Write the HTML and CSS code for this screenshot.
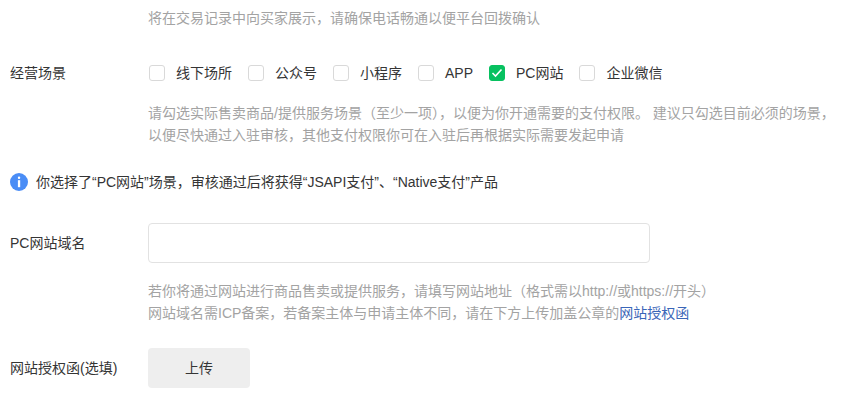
FILE: index.html
```html
<!DOCTYPE html>
<html lang="zh-CN">
<head>
<meta charset="utf-8">
<title>经营场景</title>
<link rel="stylesheet" href="styles.css">
</head>
<body>
<main class="form">
  <p class="hint hint-top">将在交易记录中向买家展示，请确保电话畅通以便平台回拨确认</p>

  <section class="row row-scene">
    <div class="label">经营场景</div>
    <div class="options">
      <label class="option"><span class="box"></span>线下场所</label>
      <label class="option"><span class="box"></span>公众号</label>
      <label class="option"><span class="box"></span>小程序</label>
      <label class="option"><span class="box"></span>APP</label>
      <label class="option"><span class="box box-on"><svg width="12" height="10" viewBox="0 0 12 10"><path d="M1.5 5 L4.5 8 L10.5 1.5" fill="none" stroke="#fff" stroke-width="1.6"/></svg></span>PC网站</label>
      <label class="option"><span class="box"></span>企业微信</label>
    </div>
  </section>
  <p class="hint hint-scene">请勾选实际售卖商品/提供服务场景（至少一项），以便为你开通需要的支付权限。 建议只勾选目前必须的场景，<br>以便尽快通过入驻审核，其他支付权限你可在入驻后再根据实际需要发起申请</p>

  <div class="notice">
    <svg class="notice-icon" width="18" height="18" viewBox="0 0 18 18"><circle cx="9" cy="9" r="9" fill="#4a8df6"/><rect x="7.9" y="3.6" width="2.3" height="2.3" rx="1" fill="#fff"/><rect x="7.9" y="7.2" width="2.3" height="7" fill="#fff"/></svg>
    <span>你选择了“PC网站”场景，审核通过后将获得“JSAPI支付”、“Native支付”产品</span>
  </div>

  <section class="row row-domain">
    <div class="label">PC网站域名</div>
    <input class="input" type="text" aria-label="PC网站域名">
  </section>
  <p class="hint hint-domain">若你将通过网站进行商品售卖或提供服务，请填写网站地址（格式需以http://或https://开头）<br>网站域名需ICP备案，若备案主体与申请主体不同，请在下方上传加盖公章的<a class="link" href="#">网站授权函</a></p>

  <section class="row row-upload">
    <div class="label">网站授权函(选填)</div>
    <button class="upload" type="button">上传</button>
  </section>
</main>
</body>
</html>
```

FILE: styles.css
```css
html, body {
  margin: 0;
  height: 100%;
  overflow: hidden;
  background: #fff;
}
body {
  font-family: "Liberation Sans", "Noto Sans CJK SC", sans-serif;
  font-size: 14px;
  line-height: 22px;
  color: #353535;
}
.form {
  padding: 7px 0 0 10px;
}
.hint {
  margin: 0 0 0 138px;
  color: #a3a3a3;
}
.row {
  display: flex;
  align-items: center;
}
.label {
  width: 138px;
  flex: none;
}
.row-scene {
  margin-top: 33px;
  height: 22px;
}
.options {
  display: flex;
  gap: 16px;
  margin-left: 1px;
}
.option {
  display: flex;
  align-items: center;
  gap: 11px;
}
.box {
  box-sizing: border-box;
  width: 16px;
  height: 16px;
  border: 1px solid #d9d9d9;
  border-radius: 3px;
  display: flex;
  align-items: center;
  justify-content: center;
}
.box-on {
  background: #07c160;
  border-color: #07c160;
}
.hint-scene {
  margin-top: 18px;
}
.notice {
  display: flex;
  align-items: center;
  gap: 8px;
  margin-top: 25px;
  color: #353535;
}
.row-domain {
  margin-top: 30px;
}
.input {
  box-sizing: border-box;
  width: 502px;
  height: 40px;
  border: 1px solid #e2e2e2;
  border-radius: 4px;
  background: #fff;
  outline: none;
  padding: 0 10px;
}
.hint-domain {
  margin-top: 17px;
}
.link {
  color: #3a66b8;
  text-decoration: none;
}
.row-upload {
  margin-top: 24px;
}
.upload {
  width: 102px;
  height: 40px;
  border: 0;
  border-radius: 4px;
  background: #eeeeee;
  color: #353535;
  font: inherit;
  padding: 0;
}
```
